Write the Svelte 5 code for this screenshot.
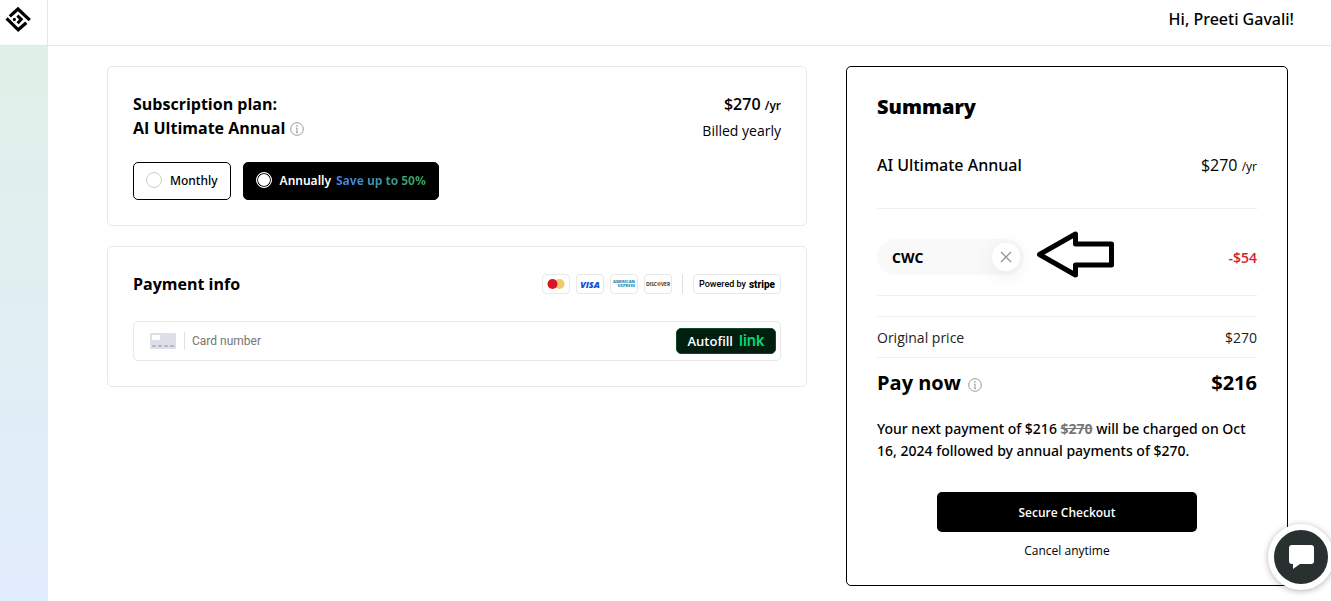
<script lang="ts">
    type Plan = {
        id: string;
        label: string;
        note?: string;
    };

    const plans: Plan[] = [
        { id: "monthly", label: "Monthly" },
        { id: "annually", label: "Annually", note: "Save up to 50%" },
    ];

    let selected = $state("annually");
    let cardNumber = $state("");
    let coupon = $state("CWC");
</script>

{#snippet infoIcon()}
    <svg class="info" width="14" height="14" viewBox="0 0 14 14" fill="none" aria-hidden="true">
        <circle cx="7" cy="7" r="6.3" stroke="#9a9a9a" />
        <path d="M7 6V10.4M6 6.2H7M6 10.4H8" stroke="#9a9a9a" />
        <circle cx="6.9" cy="3.9" r="0.8" fill="#9a9a9a" />
    </svg>
{/snippet}

<div class="shell">
    <aside class="sidebar">
        <a class="logo" href="#home" aria-label="Home">
            <svg width="27" height="27" viewBox="0 0 27 27" fill="none" aria-hidden="true">
                <path d="M4.8 10.4L13 3L24.8 14.2" stroke="#000" stroke-width="3.2" />
                <path d="M1.6 12.4L13.2 23.8L21.3 16.8" stroke="#000" stroke-width="3.2" />
                <path d="M12.4 9.6L16.2 13.4L12.6 17.2" stroke="#000" stroke-width="3" />
                <circle cx="9.4" cy="13.4" r="1.6" fill="#000" />
            </svg>
        </a>
    </aside>

    <div class="page">
        <header class="topbar">Hi, Preeti Gavali!</header>

        <main class="content">
            <div class="forms">
                <section class="card">
                    <div class="plan-head">
                        <h2>
                            Subscription plan:<br />
                            AI Ultimate Annual {@render infoIcon()}
                        </h2>
                        <div class="plan-price">
                            <strong>$270 <small>/yr</small></strong>
                            <span>Billed yearly</span>
                        </div>
                    </div>
                    <div class="options" role="radiogroup" aria-label="Billing period">
                        {#each plans as plan (plan.id)}
                            <label class="option" class:active={selected === plan.id}>
                                <input type="radio" name="plan" value={plan.id} bind:group={selected} />
                                <span>{plan.label}</span>
                                {#if plan.note}
                                    <span class="note">{plan.note}</span>
                                {/if}
                            </label>
                        {/each}
                    </div>
                </section>

                <section class="card">
                    <div class="pay-head">
                        <h2>Payment info</h2>
                        <div class="brands">
                            <span class="brand">
                                <svg width="18" height="12" viewBox="0 0 18 12" aria-label="Mastercard">
                                    <circle cx="12.5" cy="6" r="5" fill="#eecb6b" />
                                    <circle cx="5.5" cy="6" r="5" fill="#d6142b" />
                                </svg>
                            </span>
                            <span class="brand visa">VISA</span>
                            <span class="brand amex"><span>AMERICAN</span><span>EXPRESS</span></span>
                            <span class="brand discover">DISC<i></i>VER</span>
                            <span class="sep"></span>
                            <span class="brand stripe">Powered by <b>stripe</b></span>
                        </div>
                    </div>
                    <div class="card-field">
                        <svg width="26" height="16" viewBox="0 0 26 16" aria-hidden="true">
                            <rect width="26" height="16" rx="1" fill="#dcdfe8" />
                            <rect x="2" y="2" width="8" height="5" rx="1" fill="#fff" />
                            <path d="M2 13H24" stroke="#b4b9c8" stroke-width="2" stroke-dasharray="4 2" />
                        </svg>
                        <input type="text" aria-label="Card number" placeholder="Card number" bind:value={cardNumber} />
                        <button type="button" class="autofill">Autofill <b>link</b></button>
                    </div>
                </section>
            </div>

            <section class="summary">
                <h1>Summary</h1>
                <div class="row product">
                    <span>AI Ultimate Annual</span>
                    <span class="price">$270 <small>/yr</small></span>
                </div>
                <div class="row coupon">
                    {#if coupon}
                        <div class="pill">
                            <span>{coupon}</span>
                            <button type="button" aria-label="Remove coupon" onclick={() => (coupon = "")}>
                                <svg width="12" height="12" viewBox="0 0 12 12" aria-hidden="true">
                                    <path d="M1 1L11 11M11 1L1 11" stroke="#929292" stroke-width="1.3" />
                                </svg>
                            </button>
                        </div>
                        <svg class="arrow" width="78" height="52" viewBox="0 0 78 52" aria-hidden="true">
                            <path
                                d="M2.5 23.5L38.5 3V13H74.5V34H38.5V44Z"
                                fill="#fff"
                                stroke="#000"
                                stroke-width="5"
                                stroke-linejoin="round"
                            />
                        </svg>
                        <strong class="discount">-$54</strong>
                    {/if}
                </div>
                <div class="row original">
                    <span>Original price</span>
                    <span>$270</span>
                </div>
                <div class="row total">
                    <span>Pay now {@render infoIcon()}</span>
                    <span>$216</span>
                </div>
                <p>
                    Your next payment of $216 <s>$270</s> will be charged on Oct 16, 2024 followed by
                    annual payments of $270.
                </p>
                <button type="button" class="checkout">Secure Checkout</button>
                <div class="cancel">Cancel anytime</div>
            </section>
        </main>
    </div>

    <button type="button" class="chat" aria-label="Open chat">
        <svg width="26" height="26" viewBox="0 0 26 26" aria-hidden="true">
            <path
                d="M4 1H23Q26 1 26 4V17Q26 20 23 20H12L5 25V20H4Q1 20 1 17V4Q1 1 4 1Z"
                fill="#fff"
            />
        </svg>
    </button>
</div>

<style>
    :global(body) {
      background: #fff;
    }

    .shell {
      display: flex;
      min-height: 100vh;
      color: #000;
      font-family: "Open Sans", "Noto Sans", sans-serif;
      font-size: 16px;
      overflow: hidden;
    }

    .sidebar {
      flex: none;
      width: 48px;
      background: linear-gradient(#e0f1e6, #e2ecfd);
    }

    .logo {
      display: block;
      box-sizing: border-box;
      height: 46px;
      padding: 6px 0 0 5px;
      background: #fff;
      border-right: 1px solid #e6e6e6;
      border-bottom: 1px solid #e6e6e6;
    }

    .page {
      flex: 1;
      min-width: 0;
    }

    .topbar {
      box-sizing: border-box;
      height: 46px;
      padding: 0 37px;
      border-bottom: 1px solid #e6e6e6;
      font-family: "Noto Sans", sans-serif;
      font-weight: 500;
      line-height: 38px;
      text-align: right;
    }

    .content {
      display: grid;
      grid-template-columns: minmax(0, 1fr) 442px;
      align-items: start;
      gap: 39px;
      padding: 20px 43px 15px 59px;
    }

    .forms {
      display: grid;
      gap: 20px;
    }

    .card {
      padding: 25px;
      border: 1px solid #e8e8e8;
      border-radius: 5px;
    }

    h1,
    h2,
    p {
      margin: 0;
    }

    h2 {
      font-size: 16px;
      font-weight: 700;
      line-height: 24px;
    }

    small {
      font-size: 12px;
    }

    .info {
      vertical-align: -2px;
    }

    .plan-head {
      display: flex;
      justify-content: space-between;
      padding-bottom: 18px;
    }

    .plan-price {
      text-align: right;
      line-height: 24px;

      strong {
        display: block;
        font-weight: 600;
      }

      span {
        display: block;
        font-size: 14px;
        line-height: 26px;
      }
    }

    .options {
      display: flex;
      gap: 12px;
      height: 38px;
    }

    .option {
      display: flex;
      align-items: center;
      box-sizing: border-box;
      padding: 0 12px 2px;
      border: 1px solid #000;
      border-radius: 5px;
      font-family: "Noto Sans", sans-serif;
      font-size: 12px;
      font-weight: 500;
      cursor: pointer;

      &.active {
        color: #fff;
        background: #000;
        font-weight: 600;
      }

      input {
        appearance: none;
        width: 16px;
        height: 16px;
        margin: 0 8px 0 0;
        border: 1px solid #ccc;
        border-radius: 50%;
        background: #fff;
      }

      input:checked {
        border-color: #fff;
        box-shadow: inset 0 0 0 1px #000;
      }
    }

    .note {
      margin-left: 5px;
      color: transparent;
      background: linear-gradient(90deg, #4285f4, #34a853);
      background-clip: text;
      font-family: "Open Sans", sans-serif;
      font-weight: 700;
    }

    .pay-head {
      display: flex;
      align-items: center;
      justify-content: space-between;
      padding-bottom: 25px;
    }

    .brands {
      display: flex;
      align-items: center;
      gap: 6px;
    }

    .brand {
      display: flex;
      align-items: center;
      justify-content: center;
      box-sizing: border-box;
      width: 28px;
      height: 20px;
      border: 1px solid #e8e8e8;
      border-radius: 4px;
    }

    .visa {
      color: #0a4fd0;
      font-size: 9px;
      font-style: italic;
      font-weight: 800;
    }

    .amex {
      flex-direction: column;
      color: #2a8fb5;
      font-size: 4px;
      font-weight: 800;
      line-height: 4px;

      span:last-child {
        align-self: flex-end;
        margin-right: 2px;
      }
    }

    .discover {
      font-size: 5px;
      font-weight: 600;

      i {
        width: 4px;
        height: 4px;
        border-radius: 50%;
        background: #f58220;
      }
    }

    .sep {
      width: 1px;
      height: 20px;
      margin: 0 4px;
      background: #e0e0e0;
    }

    .stripe {
      gap: 3px;
      width: 88px;
      font-family: Roboto, sans-serif;
      font-size: 9px;
      font-weight: 500;

      b {
        font-size: 10px;
        font-weight: 800;
      }
    }

    .card-field {
      display: flex;
      align-items: center;
      box-sizing: border-box;
      height: 40px;
      padding: 0 4px 0 16px;
      border: 1px solid #e8e8e8;
      border-radius: 5px;

      input {
        flex: 1;
        min-width: 0;
        height: 18px;
        margin-left: 8px;
        padding: 0 0 0 7px;
        border: 0;
        border-left: 1px solid #e0e0e0;
        outline: none;
        font-family: Roboto, sans-serif;
        font-size: 12px;
      }

      input::placeholder {
        color: #757575;
      }
    }

    .autofill {
      display: flex;
      align-items: center;
      justify-content: center;
      gap: 6px;
      width: 100px;
      height: 26px;
      padding: 0;
      border: 1px solid #0b4a2a;
      border-radius: 5px;
      color: #fff;
      background: #011e0f;
      font-family: "Open Sans", sans-serif;
      font-size: 13px;
      font-weight: 600;
      line-height: 24px;

      b {
        color: #00d66f;
        font-family: Inter, sans-serif;
        font-size: 15px;
        font-weight: 600;
      }
    }

    .summary {
      padding: 25px 30px;
      border: 1px solid #000;
      border-radius: 5px;
    }

    h1 {
      font-size: 20px;
      font-weight: 800;
      line-height: 30px;
    }

    .row {
      display: flex;
      align-items: center;
      justify-content: space-between;
    }

    .product {
      height: 86px;
      border-bottom: 1px solid #eee;
      font-family: "Noto Sans", sans-serif;
      font-weight: 500;
    }

    .price {
      font-family: "Open Sans", sans-serif;
    }

    .coupon {
      gap: 13px;
      padding: 22px 0 12px;
      border-bottom: 1px solid #eee;
    }

    .pill {
      display: flex;
      align-items: center;
      justify-content: space-between;
      box-sizing: border-box;
      width: 147px;
      height: 36px;
      padding: 0 4px 0 15px;
      border-radius: 18px;
      background: #f9f9f9;
      font-size: 14px;
      font-weight: 700;

      button {
        display: flex;
        align-items: center;
        justify-content: center;
        width: 28px;
        height: 28px;
        padding: 0;
        border: 0;
        border-radius: 50%;
        background: #fff;
        box-shadow: 0 4px 20px rgba(0, 0, 0, 0.08);
      }
    }

    .discount {
      margin-left: auto;
      color: #d5202b;
      font-size: 14px;
      font-weight: 600;
    }

    .original {
      height: 40px;
      margin-top: 20px;
      border-top: 1px solid #eee;
      border-bottom: 1px solid #eee;
      color: #222;
      font-size: 14px;
    }

    .total {
      padding: 10px 0 20px;
      font-size: 20px;
      font-weight: 700;
      line-height: 30px;

      .info {
        margin-left: 2px;
      }
    }

    p {
      font-family: "Noto Sans", sans-serif;
      font-size: 14px;
      font-weight: 500;
      line-height: 22px;
    }

    s {
      color: #777;
      font-weight: 700;
    }

    .checkout {
      display: block;
      width: 260px;
      height: 40px;
      margin: 30px auto 10px;
      border: 0;
      border-radius: 5px;
      color: #fff;
      background: #000;
      font-family: inherit;
      font-size: 12px;
      font-weight: 600;
    }

    .cancel {
      font-size: 12px;
      line-height: 18px;
      text-align: center;
    }

    .chat {
      position: fixed;
      right: -3px;
      bottom: 11px;
      display: flex;
      align-items: center;
      justify-content: center;
      box-sizing: border-box;
      width: 66px;
      height: 66px;
      padding: 0;
      border: 6px solid #fff;
      border-radius: 50%;
      background: #293130;
      box-shadow: 0 1px 6px rgba(0, 0, 0, 0.3);
    }
</style>
